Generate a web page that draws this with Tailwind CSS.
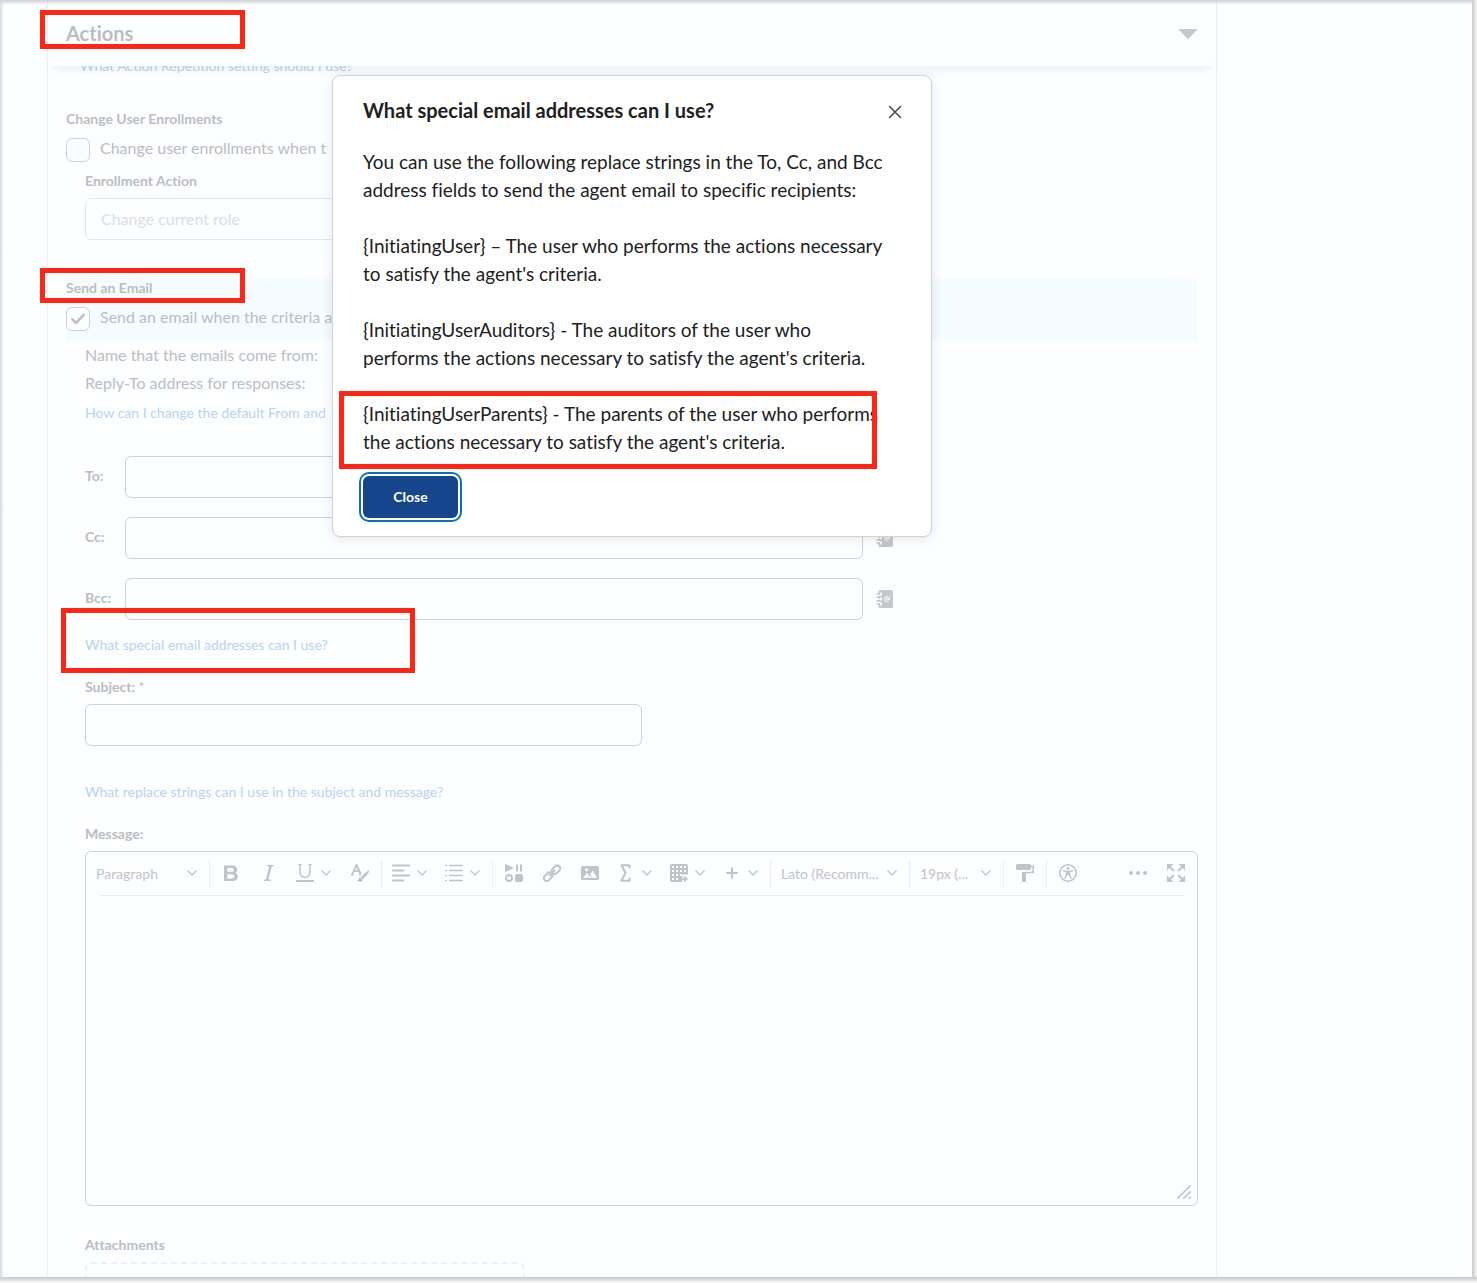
<!DOCTYPE html>
<html lang="en">
<head>
<meta charset="utf-8">
<meta name="viewport" content="width=device-width, initial-scale=1">
<title>Edit Agent</title>
<script src="https://cdn.jsdelivr.net/npm/@tailwindcss/browser@4"></script>
</head>
<body class="bg-[#fdfeff] font-['Lato',sans-serif] text-[#bcbdc0] [font-variant-ligatures:none]">
<svg class="hidden" aria-hidden="true">
  <symbol id="chev" viewBox="0 0 10 10"><path d="M1 3l4 4 4-4" fill="none" stroke="currentColor" stroke-width="1.3" stroke-linecap="round" stroke-linejoin="round"/></symbol>
  <symbol id="book" viewBox="0 0 18 18"><path fill="currentColor" d="M4 0h11.500a1.500 1.500 0 0 1 1.500 1.500v15a1.500 1.500 0 0 1-1.500 1.500H4a1.500 1.500 0 0 1-1.500-1.500v-15A1.500 1.500 0 0 1 4 0z"/><path fill="#fdfeff" d="M2 2.500h4v3H2zM2 7.500h4v3H2zM2 12.500h4v3H2z"/><path fill="currentColor" d="M2.500 2h1.700v14H2.500z"/><path fill="#fdfeff" d="M2 5h2.500v1H2zM2 8.500h2.500v1H2zM2 12h2.500v1H2z"/><path d="M1 4h2M1 7.200h2M1 10.800h2M1 14h2" stroke="currentColor" stroke-width="1.600" stroke-linecap="round"/><circle cx="11" cy="9" r="1.200" fill="none" stroke="#fdfeff" stroke-width=".8"/><path d="M12.200 7.800v1.500c0 1 1.500 1 1.500-.3a2.700 2.700 0 1 0-1.300 2.400" fill="none" stroke="#fdfeff" stroke-width=".8"/></symbol>
</svg>

<main class="relative overflow-hidden min-h-screen">
  <div class="relative ml-[47px] max-w-[1170px] min-h-screen border-x border-[#edeff5]">
    <header class="relative z-10 flex h-[66px] items-center justify-between rounded-b-lg bg-[#fdfeff] pl-[18px] pr-[19px] shadow-[0_8px_10px_-5px_rgba(80,120,160,0.12)]">
      <h2 class="text-xl font-bold leading-7">Actions</h2>
      <button type="button" aria-label="Collapse Actions" class="pt-0.5 text-[#c6c7ca]"><svg class="h-2.5 w-[18px]" viewBox="0 0 18 10"><path fill="currentColor" d="M.5 0h17c.5 0 .6.700.3 1L10 9.300c-.6.700-1.400.700-2 0L.2 1C-.1.700 0 0 .5 0z"/></svg></button>
      <div class="pointer-events-none absolute -left-2 top-2.5 h-[39px] w-[205px] border-[5px] border-[#ff2616]"></div>
    </header>

    <form class="px-[18px]" onsubmit="return false">
      <a href="#" class="-mt-2.5 ml-3.5 block text-sm leading-5 text-[#b7d3ef]">What Action Repetition setting should I use?</a>

      <h3 class="mt-[33px] text-sm font-bold leading-5">Change User Enrollments</h3>
      <label class="mt-[9px] flex items-start gap-2.5 text-base leading-5">
        <input type="checkbox" class="h-6 w-6 shrink-0 appearance-none rounded-md border border-[#cfd1d6] bg-[#f9fdff]">Change user enrollments when t
      </label>
      <div class="pl-[19px]">
        <label for="action" class="mt-[9px] block text-sm font-bold leading-5">Enrollment Action</label>
        <select id="action" class="mt-[7px] block h-[42px] w-[400px] appearance-none rounded-md border border-[#e4e6ea] px-[15px] text-base text-[#dcdde0]"><option>Change current role</option></select>
      </div>

      <section class="relative mt-[39px] h-[62px] bg-[#f4fcff]">
        <h3 class="text-sm font-bold leading-[18px]">Send an Email</h3>
        <label class="mt-2.5 flex items-start gap-2.5 text-base leading-5">
          <span class="relative h-6 w-6 shrink-0"><input type="checkbox" checked class="block h-6 w-6 appearance-none rounded-md border border-[#cfd1d6] bg-[#fdfeff]"><svg class="pointer-events-none absolute inset-0 h-6 w-6 text-[#c2c3c6]" viewBox="0 0 24 24"><path d="M6.500 12.500l3.500 3.500 7.500-8" fill="none" stroke="currentColor" stroke-width="2.800" stroke-linecap="round" stroke-linejoin="round"/></svg></span>Send an email when the criteria a
        </label>
        <div class="pointer-events-none absolute -left-[26px] -top-[11px] h-[35px] w-[205px] border-[5px] border-[#ff2616]"></div>
      </section>

      <div class="pl-[19px]">
        <div class="text-base leading-7">
          <p>Name that the emails come from:</p>
          <p>Reply-To address for responses:</p>
        </div>
        <a href="#" class="mt-1.5 block text-sm leading-5 text-[#b7d3ef]">How can I change the default From and</a>

        <div class="mt-[33px] flex flex-col gap-[19px] text-sm font-bold">
          <div class="flex items-center"><label for="to" class="w-10 pb-0.5">To:</label><input id="to" type="text" class="h-[42px] min-w-0 basis-[738px] rounded-md border border-[#cfd1d6] px-3"><button type="button" aria-label="Address book" class="ml-[13px] text-[#c6c7ca]"><svg class="h-[18px] w-[18px]"><use href="#book"/></svg></button></div>
          <div class="flex items-center"><label for="cc" class="w-10 pb-0.5">Cc:</label><input id="cc" type="text" class="h-[42px] min-w-0 basis-[738px] rounded-md border border-[#cfd1d6] px-3"><button type="button" aria-label="Address book" class="ml-[13px] text-[#c6c7ca]"><svg class="h-[18px] w-[18px]"><use href="#book"/></svg></button></div>
          <div class="flex items-center"><label for="bcc" class="w-10 pb-0.5">Bcc:</label><input id="bcc" type="text" class="h-[42px] min-w-0 basis-[738px] rounded-md border border-[#cfd1d6] px-3"><button type="button" aria-label="Address book" class="ml-[13px] text-[#c6c7ca]"><svg class="h-[18px] w-[18px]"><use href="#book"/></svg></button></div>
        </div>

        <div class="relative mt-[15px]">
          <a href="#" class="block text-sm leading-5 text-[#b7d3ef]">What special email addresses can I use?</a>
          <div class="pointer-events-none absolute -left-6 -top-[27px] h-[65px] w-[354px] border-[5px] border-[#ff2616]"></div>
        </div>

        <label for="subject" class="mt-[22px] block text-sm font-bold leading-5">Subject: <span class="font-normal">*</span></label>
        <input id="subject" type="text" class="mt-[7px] block h-[42px] w-full max-w-[557px] rounded-md border border-[#cfd1d6] px-3">
        <a href="#" class="mt-9 block text-sm leading-5 text-[#b7d3ef]">What replace strings can I use in the subject and message?</a>

        <label for="message" class="mt-[22px] block text-sm font-bold leading-5">Message:</label>
        <div class="relative mt-[7px] rounded-md border border-[#cfd1d6]">
          <div class="flex h-[43px] items-center text-sm text-[#c2c3c6]" role="toolbar" aria-label="Formatting">
            <div class="relative w-[123px]"><select aria-label="Block format" class="block w-full appearance-none pl-2.5"><option>Paragraph</option></select><svg class="pointer-events-none absolute right-3 top-1 h-2.5 w-2.5"><use href="#chev"/></svg></div>
            <span class="h-7 w-px bg-[#edeff5]"></span>
            <div class="flex px-0.5 pb-0.5">
              <button type="button" aria-label="Bold" class="flex h-8 w-[38px] items-center justify-center"><svg class="h-[18px] w-[18px]" viewBox="0 0 18 18"><path fill="currentColor" fill-rule="evenodd" d="M2 1.500h8c3.300 0 5.200 1.600 5.200 4.100 0 1.500-.7 2.600-1.900 3.200 1.500.5 2.500 1.800 2.500 3.600 0 2.800-2.100 4.600-5.400 4.600H2zM5.300 4v3.800h4c1.700 0 2.500-.7 2.500-1.900S11 4 9.300 4zM5.300 10.200v4.300h4.300c1.800 0 2.700-.8 2.700-2.200 0-1.400-.9-2.100-2.700-2.100z"/></svg></button>
              <button type="button" aria-label="Italic" class="flex h-8 w-[38px] items-center justify-center"><svg class="h-[18px] w-[18px]" viewBox="0 0 18 18"><path d="M7 1.700h6.500M4 16.300h6.500" stroke="currentColor" stroke-width="1.400"/><path d="M10.600 2L7 16" stroke="currentColor" stroke-width="2.400"/></svg></button>
              <button type="button" aria-label="Underline" class="flex h-8 w-[53px] items-center gap-[7px] pl-2"><svg class="h-[18px] w-[18px]" viewBox="0 0 18 18"><path d="M4 0v8.500a5 5 0 0 0 10 0V0M2.300.6h3.400M12.300.6h3.400" fill="none" stroke="currentColor" stroke-width="1.500"/><path d="M.8 17h16.400" stroke="currentColor" stroke-width="2" stroke-linecap="round"/></svg><svg class="h-2.5 w-2.5"><use href="#chev"/></svg></button>
              <button type="button" aria-label="Strikethrough and more" class="flex h-8 w-[38px] items-center justify-center"><svg class="h-[18px] w-[18px]" viewBox="0 0 18 18"><path d="M1.200 10.500L5.500 1l4.200 9M2.800 7.200h5.500M0 10.700h2.700M8 10.700h2" fill="none" stroke="currentColor" stroke-width="1.800"/><path d="M17.900 6.200c-3.200 2-6.200 4.500-8 7l2 1.900c2.900-2 5.200-5.600 6.700-8.500zM9.400 13.200c-2 .2-1.400 2.500-3.100 3.200 1.500 2.300 5.400 1.800 5.600-1z" fill="currentColor"/></svg></button>
            </div>
            <span class="h-7 w-px bg-[#edeff5]"></span>
            <div class="flex px-0.5 pb-0.5">
              <button type="button" aria-label="Align" class="flex h-8 w-[53px] items-center gap-[7px] pl-2"><svg class="h-[18px] w-[18px]" viewBox="0 0 18 18"><path d="M.8 1.500h16.400M.8 6.500h10.700M.8 11.500h16.400M.8 16.500h10.700" stroke="currentColor" stroke-width="1.800" stroke-linecap="round"/></svg><svg class="h-2.5 w-2.5"><use href="#chev"/></svg></button>
              <button type="button" aria-label="List" class="flex h-8 w-[53px] items-center gap-[7px] pl-2"><svg class="h-[18px] w-[18px]" viewBox="0 0 18 18"><path d="M4.800 1.500h12.400M4.800 6.500h12.400M4.800 11.500h12.400M4.800 16.500h12.400M.8 1.500h.4M.8 6.500h.4M.8 11.500h.4M.8 16.500h.4" stroke="currentColor" stroke-width="1.700" stroke-linecap="round"/></svg><svg class="h-2.5 w-2.5"><use href="#chev"/></svg></button>
            </div>
            <span class="h-7 w-px bg-[#edeff5]"></span>
            <div class="flex px-0.5 pb-0.5">
              <button type="button" aria-label="Insert stuff" class="flex h-8 w-[38px] items-center justify-center"><svg class="h-[18px] w-[18px]" viewBox="0 0 18 18"><path fill="currentColor" d="M0 .8C0 .2.600 0 1 .2l7 3.300c.6.300.6.800 0 1L1 7.800c-.5.200-1 0-1-.6zM11 0.500h2v7h-2zM15 .5h2v7h-2z"/><circle cx="4" cy="14" r="3" fill="none" stroke="currentColor" stroke-width="2"/><rect x="10" y="10" width="8" height="8" rx="2" fill="currentColor"/></svg></button>
              <button type="button" aria-label="Insert link" class="flex h-8 w-[38px] items-center justify-center"><svg class="h-[18px] w-[18px]" viewBox="0 0 18 18"><g fill="none" stroke="currentColor" stroke-width="2"><rect x="8.300" y="2.700" width="9.400" height="6" rx="3" transform="rotate(-45 13 5.700)"/><rect x=".3" y="9.800" width="9.400" height="6" rx="3" transform="rotate(-45 5 12.800)"/><path d="M6.500 11.500l5-5" stroke-linecap="round"/></g></svg></button>
              <button type="button" aria-label="Insert image" class="flex h-8 w-[38px] items-center justify-center"><svg class="h-[18px] w-[18px]" viewBox="0 0 18 18"><rect y="2" width="18" height="14" rx="1.500" fill="currentColor"/><path d="M2 14l4-5 2.500 2.500L12 6.500l4 7.500z" fill="#fdfeff"/><circle cx="5.500" cy="5.800" r="1.500" fill="#fdfeff"/><path d="M7 13l2-2 2 2.500" fill="none" stroke="currentColor"/></svg></button>
              <button type="button" aria-label="Equation" class="flex h-8 w-[53px] items-center gap-[7px] pl-2"><svg class="h-[18px] w-[18px]" viewBox="0 0 18 18"><path d="M12.500 3.500V1.200H4.500L8.500 9l-4 7.800h8v-2.300" fill="none" stroke="currentColor" stroke-width="2.100" stroke-linejoin="round" stroke-linecap="round"/></svg><svg class="h-2.5 w-2.5"><use href="#chev"/></svg></button>
              <button type="button" aria-label="Table" class="flex h-8 w-[53px] items-center gap-[7px] pl-2"><svg class="h-[18px] w-[18px]" viewBox="0 0 18 18"><path fill="currentColor" d="M2 0h14a2 2 0 0 1 2 2v8.500h-5.500V18H2a2 2 0 0 1-2-2V2a2 2 0 0 1 2-2z"/><path fill="#fdfeff" d="M2 2h2v2H2zM6 2h2v2H6zM10 2h2v2h-2zM14 2h2v2h-2zM2 6h2v2H2zM6 6h2v2H6zM10 6h2v2h-2zM14 6h2v2h-2zM2 10h2v2H2zM6 10h2v2H6zM10 10h2v2h-2zM2 14h2v2H2zM6 14h2v2H6z"/><path d="M15 12.500v5M12.500 15h5" stroke="#fdfeff" stroke-width="4"/><path d="M15 12.500v5M12.500 15h5" stroke="currentColor" stroke-width="2"/></svg><svg class="h-2.5 w-2.5"><use href="#chev"/></svg></button>
              <button type="button" aria-label="Other insert options" class="flex h-8 w-[53px] items-center gap-[7px] pl-2"><svg class="h-[18px] w-[18px]" viewBox="0 0 18 18"><path d="M9 4v10M4 9h10" stroke="currentColor" stroke-width="2" stroke-linecap="round"/></svg><svg class="h-2.5 w-2.5"><use href="#chev"/></svg></button>
            </div>
            <span class="h-7 w-px bg-[#edeff5]"></span>
            <div class="relative w-[138px]"><select aria-label="Font" class="block w-full appearance-none pl-2.5"><option>Lato (Recomm...</option></select><svg class="pointer-events-none absolute right-3 top-1 h-2.5 w-2.5"><use href="#chev"/></svg></div>
            <span class="h-7 w-px bg-[#edeff5]"></span>
            <div class="relative w-[93px]"><select aria-label="Font size" class="block w-full appearance-none pl-2.5"><option>19px (...</option></select><svg class="pointer-events-none absolute right-3 top-1 h-2.5 w-2.5"><use href="#chev"/></svg></div>
            <span class="h-7 w-px bg-[#edeff5]"></span>
            <div class="flex px-0.5 pb-0.5">
              <button type="button" aria-label="Format painter" class="flex h-8 w-[38px] items-center justify-center"><svg class="h-[18px] w-[18px]" viewBox="0 0 18 18"><rect width="15" height="6" rx="1.500" fill="currentColor"/><path d="M15 2.500h2.200V8.500H8" fill="none" stroke="currentColor" stroke-width="1.600"/><path d="M6 8h4v9a1 1 0 0 1-1 1H7a1 1 0 0 1-1-1z" fill="currentColor"/></svg></button>
            </div>
            <span class="h-7 w-px bg-[#edeff5]"></span>
            <div class="flex px-0.5 pb-0.5">
              <button type="button" aria-label="Accessibility checker" class="flex h-8 w-[38px] items-center justify-center"><svg class="h-[18px] w-[18px]" viewBox="0 0 18 18"><circle cx="9" cy="9" r="8.200" fill="none" stroke="currentColor" stroke-width="1.600"/><circle cx="9" cy="4.500" r="1.400" fill="currentColor"/><path d="M4.500 6.800l3 .7v3L6 14.200M13.500 6.800l-3 .7v3l1.500 3.700" fill="none" stroke="currentColor" stroke-width="1.400" stroke-linecap="round"/><path fill="currentColor" d="M7 6.800h4v4.500H7z"/></svg></button>
            </div>
            <div class="ml-auto flex pb-0.5 pr-0.5">
              <button type="button" aria-label="More actions" class="flex h-8 w-[38px] items-center justify-center"><svg class="h-[18px] w-[18px]" viewBox="0 0 18 18" fill="currentColor"><circle cx="2" cy="9" r="2"/><circle cx="9" cy="9" r="2"/><circle cx="16" cy="9" r="2"/></svg></button>
              <button type="button" aria-label="Fullscreen" class="flex h-8 w-[38px] items-center justify-center"><svg class="h-[18px] w-[18px]" viewBox="0 0 18 18"><path fill="currentColor" d="M0 0h6.500L0 6.500zM18 0h-6.500L18 6.500zM0 18h6.500L0 11.500zM18 18h-6.500l6.500-6.500z"/><path d="M2 2l5 5M16 2l-5 5M2 16l5-5M16 16l-5-5" stroke="currentColor" stroke-width="2"/></svg></button>
            </div>
          </div>
          <div class="mx-3 h-px bg-[#edeff2]"></div>
          <textarea id="message" class="block h-[309px] w-full resize-none p-3 text-base"></textarea>
          <svg class="pointer-events-none absolute bottom-1.5 right-1.5 h-3.5 w-3.5 text-[#c6c7ca]" viewBox="0 0 14 14"><path d="M.8 13.200L13.200.8M6.800 13.200l6.400-6.400M12.400 13.200l.8-.8" stroke="currentColor" stroke-width="1.700" stroke-linecap="round"/></svg>
        </div>

        <h3 class="mt-[29px] text-sm font-bold leading-5">Attachments</h3>
        <div class="mt-[7px] h-[21px] max-w-[440px] rounded-t-md border-2 border-b-0 border-dashed border-[#eef0f6]"></div>
      </div>
    </form>

    <div role="dialog" aria-labelledby="dlg-title" class="absolute left-1/2 top-[75px] z-20 h-[462px] w-[600px] -translate-x-1/2 rounded-lg border border-[#cdd5dc] bg-white px-[30px] text-[#202122] shadow-[0_2px_12px_rgba(0,0,0,0.1)]">
      <div class="flex items-center justify-between pt-5">
        <h2 id="dlg-title" class="text-xl font-bold leading-7">What special email addresses can I use?</h2>
        <button type="button" aria-label="Close dialog" class="-mr-px pt-1 text-[#494c4e]"><svg class="h-3.5 w-3.5" viewBox="0 0 14 14"><path d="M1.500 1.500l11 11M12.500 1.500l-11 11" stroke="currentColor" stroke-width="1.600" stroke-linecap="round"/></svg></button>
      </div>
      <div class="mt-6 -mr-2 flex flex-col gap-7 text-[19px] leading-7">
        <p>You can use the following replace strings in the To, Cc, and Bcc<br>address fields to send the agent email to specific recipients:</p>
        <p>{InitiatingUser} – The user who performs the actions necessary<br>to satisfy the agent's criteria.</p>
        <p>{InitiatingUserAuditors} - The auditors of the user who<br>performs the actions necessary to satisfy the agent's criteria.</p>
        <p class="relative">{InitiatingUserParents} - The parents of the user who performs<br>the actions necessary to satisfy the agent's criteria.
          <span class="pointer-events-none absolute -left-6 -top-[9px] h-[78px] w-[538px] border-[5px] border-[#ff2616]"></span></p>
      </div>
      <button type="button" class="mt-5 h-[42px] w-[95px] rounded-md bg-[#17458b] text-sm font-bold text-white shadow-[0_0_0_2px_#fff,0_0_0_4px_#0a6fbf]">Close</button>
    </div>
  </div>

  <!-- raised page edges -->
  <div class="pointer-events-none absolute inset-x-0 top-0 z-30 h-[5px] bg-linear-to-b from-[#cfd0d3] to-transparent"></div>
  <div class="pointer-events-none absolute inset-y-0 left-0 z-30 w-1 bg-linear-to-r from-[#d6d7da] to-transparent"></div>
  <div class="pointer-events-none absolute inset-y-0 right-0 z-30 w-[5px] bg-linear-to-r from-[#c9cacd] to-[#f6f6f7]"></div>
  <div class="pointer-events-none absolute inset-x-0 bottom-0 z-30 h-1.5 bg-linear-to-b from-[#c6c7ca] to-[#f9f9fa]"></div>
</main>
</body>
</html>
